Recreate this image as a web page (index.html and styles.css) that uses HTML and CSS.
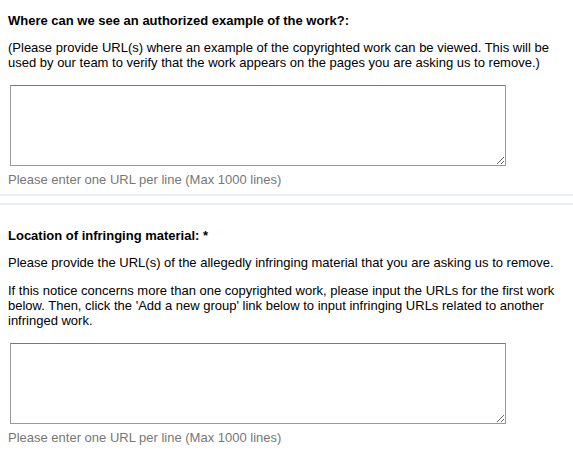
FILE: index.html
```html
<!DOCTYPE html>
<html>
<head>
<meta charset="utf-8">
<link rel="stylesheet" href="styles.css">
</head>
<body>
<div class="section first">
  <h3 class="label">Where can we see an authorized example of the work?:</h3>
  <p class="hint">(Please provide URL(s) where an example of the copyrighted work can be viewed. This will be used by our team to verify that the work appears on the pages you are asking us to remove.)</p>
  <textarea class="urls"></textarea>
  <div class="note">Please enter one URL per line (Max 1000 lines)</div>
</div>
<div class="section second">
  <h3 class="label">Location of infringing material: *</h3>
  <p class="hint">Please provide the URL(s) of the allegedly infringing material that you are asking us to remove.</p>
  <p class="hint tight">If this notice concerns more than one copyrighted work, please input the URLs for the first work below. Then, click the 'Add a new group' link below to input infringing URLs related to another infringed work.</p>
  <textarea class="urls"></textarea>
  <div class="note">Please enter one URL per line (Max 1000 lines)</div>
</div>
</body>
</html>
```

FILE: styles.css
```css
html, body {
  margin: 0;
  padding: 0;
  background: #fff;
}
body {
  font-family: "Liberation Sans", Arial, sans-serif;
  font-size: 13px;
  line-height: 15px;
  color: #000;
}
.section {
  padding: 0 8px;
}
.first {
  padding-top: 13px;
  padding-bottom: 7px;
  border-bottom: 2px solid #ebeef8;
}
.second {
  margin-top: 7px;
  padding-top: 23px;
  border-top: 2px solid #ebeef8;
}
.label {
  margin: 0;
  font-size: 13px;
  font-weight: bold;
  line-height: 15px;
}
.hint {
  margin: 12px 0 0;
}
.hint.tight {
  margin-top: 13px;
}
.urls {
  display: block;
  box-sizing: border-box;
  width: 496px;
  height: 81px;
  margin: 15px 0 0 2px;
  padding: 2px;
  border: 1px solid #999;
  border-top-color: #7a7a7a;
  background: #fff;
  font-family: "Liberation Sans", Arial, sans-serif;
  font-size: 13px;
}
.note {
  margin-top: 6px;
  color: #777;
}
```
